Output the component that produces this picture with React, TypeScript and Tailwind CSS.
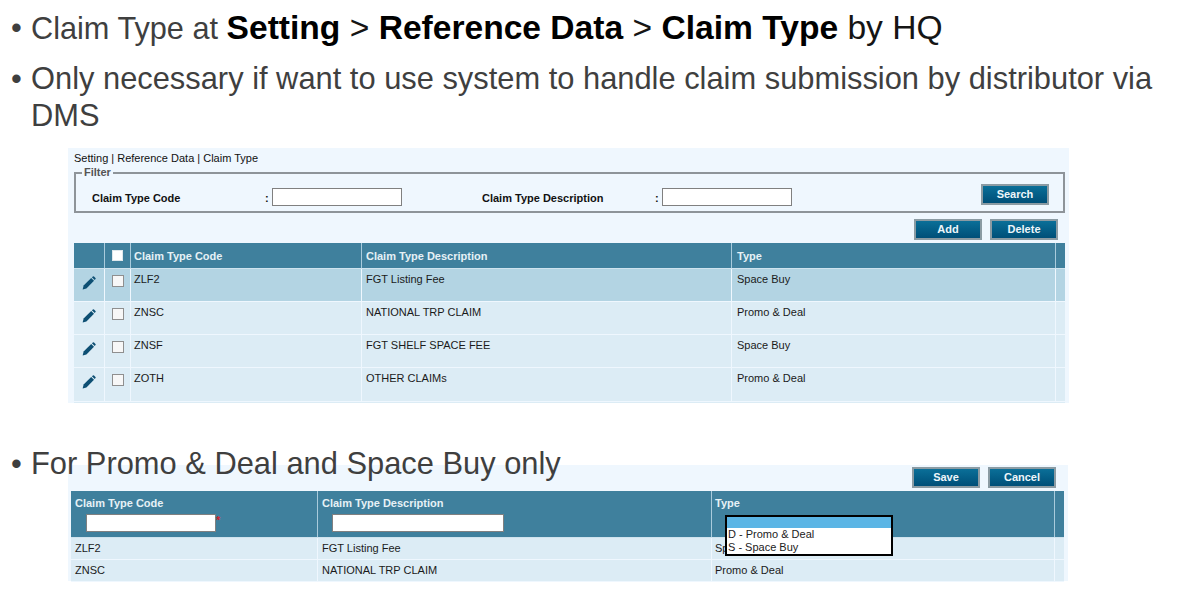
const MAIN_COLS = "grid grid-cols-[31px_26px_231px_370px_324px_1fr]";
const EDIT_COLS = "grid grid-cols-[247px_394px_343px_1fr]";

const CLAIM_TYPES = [
  { code: "ZLF2", description: "FGT Listing Fee", type: "Space Buy", h: "h-[33px]", bg: "bg-[#b3d4e3]" },
  { code: "ZNSC", description: "NATIONAL TRP CLAIM", type: "Promo & Deal", h: "h-[33px]", bg: "bg-[#dcecf5]" },
  { code: "ZNSF", description: "FGT SHELF SPACE FEE", type: "Space Buy", h: "h-[33px]", bg: "bg-[#dcecf5]" },
  { code: "ZOTH", description: "OTHER CLAIMs", type: "Promo & Deal", h: "h-[34px]", bg: "bg-[#dcecf5]" },
];

function Bullet({ children, className = "" }: { children: React.ReactNode; className?: string }) {
  return (
    <div className={`flex pl-[11px] pr-[20px] text-[30.85px] leading-[37px] text-[#3f3f3f] ${className}`}>
      <span className="w-[20px] shrink-0">•</span>
      <p>{children}</p>
    </div>
  );
}

function Btn({ label, className = "" }: { label: string; className?: string }) {
  return (
    <button className={`h-[21px] w-[68px] border-2 border-[#8b9ba3] bg-gradient-to-b from-[#0b6f98] to-[#004f78] text-[11px] font-bold leading-none text-[#eef6fa] ${className}`}>
      {label}
    </button>
  );
}

function Pencil() {
  return (
    <svg viewBox="0 0 14 14" className="h-[14px] w-[14px]">
      <path d="M0.6 13.4 L1.6 9.6 L9.2 2 L12 4.8 L4.4 12.4 Z" fill="#0d4f73" />
      <path d="M9.9 1.3 L10.9 0.4 Q11.4 0 12 0.5 L13.5 2 Q14 2.6 13.5 3.1 L12.7 4.1 Z" fill="#0d4f73" />
    </svg>
  );
}

function Check({ white = false }: { white?: boolean }) {
  return (
    <span className={`block border ${white ? "h-[11px] w-[11px] border-[#dfe8ec] bg-white" : "h-[12px] w-[12px] border-[#8f8f8f] bg-[#f7f7f7]"}`} />
  );
}

function TextInput({ className = "" }: { className?: string }) {
  return <input readOnly className={`h-[18px] border border-[#808080] bg-white ${className}`} />;
}

export default function App() {
  return (
    <div className="h-[596px] w-[1181px] overflow-hidden bg-white font-['Liberation_Sans',Arial,sans-serif]">
      <div className="pt-[9px]">
        <Bullet>
          <span className="text-[30.7px]">Claim Type at </span>
          <span className="text-[33.6px] text-[#151515]">
            <b className="text-black">Setting</b> &gt; <b className="text-black">Reference Data</b> &gt; <b className="text-black">Claim Type</b> by HQ
          </span>
        </Bullet>
        <Bullet className="mt-[13px]">Only necessary if want to use system to handle claim submission by distributor via DMS</Bullet>
      </div>

      <section className="ml-[68px] mt-[14px] h-[255px] w-[1001px] bg-[#eff7fe] pl-[6px] pr-[4px] text-[11px] text-[#111]">
        <div className="pt-[4px] text-[11px] leading-[13px]">Setting | Reference Data | Claim Type</div>
        <div className="relative mt-[7px] flex h-[41px] items-start border-2 border-[#8e9499] pl-[16px] pr-[14px] pt-[14px]">
          <span className="absolute left-[6px] top-[-8px] bg-[#eff7fe] px-[2px] text-[11px] font-bold leading-[13px] text-[#555]">Filter</span>
          <span className="w-[173px] pt-[4px] font-bold leading-[13px]">Claim Type Code</span>
          <span className="w-[7px] pt-[4px] font-bold leading-[13px]">:</span>
          <TextInput className="w-[130px]" />
          <span className="ml-[80px] w-[173px] pt-[4px] font-bold leading-[13px]">Claim Type Description</span>
          <span className="w-[7px] pt-[4px] font-bold leading-[13px]">:</span>
          <TextInput className="w-[130px]" />
          <Btn label="Search" className="ml-auto -mt-[4px] h-[20px] w-[67px]" />
        </div>
        <div className="mr-[7px] mt-[6px] flex justify-end gap-[8px]">
          <Btn label="Add" />
          <Btn label="Delete" />
        </div>
        <div className={`${MAIN_COLS} mt-[3px] h-[26px] border-b border-[#cfe3ee] bg-[#3f809d] font-bold text-[#e6f1f6]`}>
          <div className="border-r border-[#a9cbdc]" />
          <div className="flex items-center justify-center border-r border-[#a9cbdc]">
            <Check white />
          </div>
          <div className="border-r border-[#a9cbdc] pl-[3px] pt-[7px] leading-[13px]">Claim Type Code</div>
          <div className="border-r border-[#a9cbdc] pl-[4px] pt-[7px] leading-[13px]">Claim Type Description</div>
          <div className="border-r border-[#a9cbdc] pl-[5px] pt-[7px] leading-[13px]">Type</div>
          <div />
        </div>
        {CLAIM_TYPES.map((r) => (
          <div key={r.code} className={`${MAIN_COLS} ${r.h} border-b border-[#eff7fe] ${r.bg} text-[#1a1a1a]`}>
            <div className="flex items-start justify-center border-r border-[#eff7fe] pt-[7px]">
              <Pencil />
            </div>
            <div className="flex items-start justify-center border-r border-[#eff7fe] pt-[6px]">
              <Check />
            </div>
            <div className="border-r border-[#eff7fe] pl-[3px] pt-[4px] leading-[13px]">{r.code}</div>
            <div className="border-r border-[#eff7fe] pl-[4px] pt-[4px] leading-[13px]">{r.description}</div>
            <div className="border-r border-[#eff7fe] pl-[5px] pt-[4px] leading-[13px]">{r.type}</div>
            <div />
          </div>
        ))}
        <div className={`${MAIN_COLS} h-[1px] bg-[#dcecf5]`} />
      </section>

      <Bullet className="relative z-10 mt-[42px]">For Promo &amp; Deal and Space Buy only</Bullet>

      <section className="-mt-[17px] ml-[68px] h-[116px] w-[1000px] bg-[#eff7fe] pl-[3px] pr-[4px] text-[11px] text-[#111]">
        <div className="flex justify-end gap-[8px] pr-[8px] pt-[2px]">
          <Btn label="Save" />
          <Btn label="Cancel" />
        </div>
        <div className={`${EDIT_COLS} relative mt-[3px] h-[47px] border-b border-[#cfe3ee] bg-[#3f809d] font-bold text-[#e6f1f6]`}>
          <div className="border-r border-[#a9cbdc] pl-[4px] pt-[6px] leading-[13px]">
            Claim Type Code
            <div className="mt-[4px] flex items-start pl-[11px]">
              <TextInput className="w-[130px]" />
              <span className="text-[#d2232a]">*</span>
            </div>
          </div>
          <div className="border-r border-[#a9cbdc] pl-[4px] pt-[6px] leading-[13px]">
            Claim Type Description
            <div className="mt-[4px] pl-[10px]">
              <TextInput className="w-[172px]" />
            </div>
          </div>
          <div className="border-r border-[#a9cbdc] pl-[3px] pt-[6px] leading-[13px]">Type</div>
          <div />
          <div className="absolute left-[654px] top-[24px] z-10 h-[41px] w-[168px] border-2 border-black bg-white font-normal leading-[13px] text-[#222]">
            <div className="h-[11px] bg-[#5bb5e5]" />
            <div className="pl-[1px]">D - Promo &amp; Deal</div>
            <div className="pl-[1px]">S - Space Buy</div>
          </div>
        </div>
        {[
          ["ZLF2", "FGT Listing Fee", "Space Buy"],
          ["ZNSC", "NATIONAL TRP CLAIM", "Promo & Deal"],
        ].map(([code, description, type]) => (
          <div key={code} className={`${EDIT_COLS} h-[22px] border-b border-[#eff7fe] bg-[#dcecf5] leading-[13px] text-[#1a1a1a]`}>
            <div className="border-r border-[#eff7fe] pl-[4px] pt-[4px]">{code}</div>
            <div className="border-r border-[#eff7fe] pl-[4px] pt-[4px]">{description}</div>
            <div className="border-r border-[#eff7fe] pl-[3px] pt-[4px]">{type}</div>
            <div />
          </div>
        ))}
      </section>
    </div>
  );
}
